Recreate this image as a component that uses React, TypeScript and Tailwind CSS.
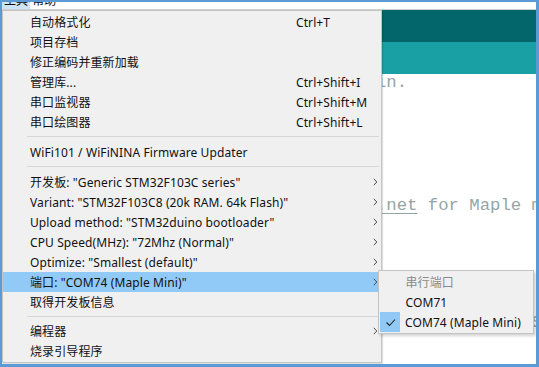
import type { ReactNode } from "react";

const ui = "font-['Noto_Sans','Noto_Sans_CJK_SC',sans-serif] tracking-[0.1px]";

function Chevron() {
  return (
    <svg width="5" height="8" viewBox="0 0 5 8" className="ml-auto mr-[3px] shrink-0">
      <path d="M0.8 0.8 L3.8 4 L0.8 7.2" fill="none" stroke="#4a4a4a" strokeWidth="1" />
    </svg>
  );
}

function Item({
  label,
  shortcut,
  sub,
  active,
}: {
  label: ReactNode;
  shortcut?: string;
  sub?: boolean;
  active?: boolean;
}) {
  return (
    <div className={`flex h-[20px] items-center pl-[27px] ${active ? "bg-[#91c9f7]" : ""}`}>
      <span className="w-[266px] shrink-0 whitespace-nowrap pt-px">{label}</span>
      {shortcut && <span className="whitespace-nowrap pt-px">{shortcut}</span>}
      {sub && <Chevron />}
    </div>
  );
}

function Sep({ h = "h-[10px]" }: { h?: string }) {
  return (
    <div className={`${h} pt-[4px]`}>
      <div className="ml-[24px] mr-[2px] h-px bg-[#d6d6d6]" />
    </div>
  );
}

export default function App() {
  return (
    <div className="h-[367px] w-[539px] overflow-hidden border-b-[3px] border-l-2 border-r-[3px] border-t-2 border-[#5b9bd5] bg-white">
      <div className="relative flex h-full flex-col">
        {/* menu bar, mostly scrolled out of view */}
        <div className={`flex h-[8px] shrink-0 overflow-hidden border-b border-[#cfcfcf] bg-white text-[12px] text-[#111] ${ui}`}>
          <span className="-mt-[10px] h-[17px] bg-[#cce4f7] px-[2px] leading-[17px]">工具</span>
          <span className="-mt-[10px] h-[17px] px-[2px] leading-[17px]">帮助</span>
        </div>

        {/* editor behind the menu */}
        <div className="h-[32px] shrink-0 bg-[#03666a]" />
        <div className="h-[32px] shrink-0 bg-[#19a0a4]" />
        <div className="flex-1 pl-[52.5px] pt-px font-['Liberation_Mono',monospace] text-[17.3px] leading-[16px] text-[#95a5a6]">
          <div className="whitespace-pre">This code is in the public domain.</div>
          <div className="mt-[107px] whitespace-pre">
            {" See also "}
            <span className="underline decoration-1 underline-offset-[3px]">http://www.stm32duino.net</span>
            {" for Maple mini"}
          </div>
          <div className="mt-[101px] whitespace-pre">void setup() {"{"}  pinMode(LED_BUILTIN, OUTPUT); Serial.begin(9600);</div>
        </div>

        {/* Tools dropdown */}
        <div
          className={`absolute left-0 top-[8px] w-[380px] border border-[#c4c4c4] bg-[#f0f0f0] pt-px text-[12px] text-[#111] shadow-[1px_1px_1px_rgba(0,0,0,0.12)] ${ui}`}
        >
          <Item label="自动格式化" shortcut="Ctrl+T" />
          <Item label="项目存档" />
          <Item label="修正编码并重新加载" />
          <Item label="管理库..." shortcut="Ctrl+Shift+I" />
          <Item label="串口监视器" shortcut="Ctrl+Shift+M" />
          <Item label="串口绘图器" shortcut="Ctrl+Shift+L" />
          <Sep />
          <Item label="WiFi101 / WiFiNINA Firmware Updater" />
          <Sep />
          <Item label={'开发板: "Generic STM32F103C series"'} sub />
          <Item label={'Variant: "STM32F103C8 (20k RAM. 64k Flash)"'} sub />
          <Item label={'Upload method: "STM32duino bootloader"'} sub />
          <Item label={'CPU Speed(MHz): "72Mhz (Normal)"'} sub />
          <Item label={'Optimize: "Smallest (default)"'} sub />
          <Item label={'端口: "COM74 (Maple Mini)"'} sub active />
          <Item label="取得开发板信息" />
          <Sep h="h-[9px]" />
          <Item label="编程器" sub />
          <Item label="烧录引导程序" />
          <div className="h-px" />
        </div>

        {/* Port submenu */}
        <div
          className={`absolute left-[376px] top-[268px] w-[156px] border border-[#c4c4c4] bg-[#f0f0f0] py-px text-[12px] text-[#111] shadow-[2px_2px_3px_rgba(0,0,0,0.18)] ${ui}`}
        >
          <div className="flex h-[20px] items-center pl-[26.5px] pt-px text-[#8a8a8a]">串行端口</div>
          <div className="flex h-[20px] items-center pl-[26.5px] pt-px">COM71</div>
          <div className="flex h-[20px] items-center">
            <span className="ml-px mr-[5px] flex h-[20px] w-[20px] items-center justify-center bg-[#90c8f6]">
              <svg width="20" height="20" viewBox="0 0 20 20">
                <path d="M6.5 10.5 L9.5 13.5 L15 7.5" fill="none" stroke="#222" strokeWidth="1.1" />
              </svg>
            </span>
            <span className="whitespace-nowrap pt-px">COM74 (Maple Mini)</span>
          </div>
        </div>
      </div>
    </div>
  );
}
